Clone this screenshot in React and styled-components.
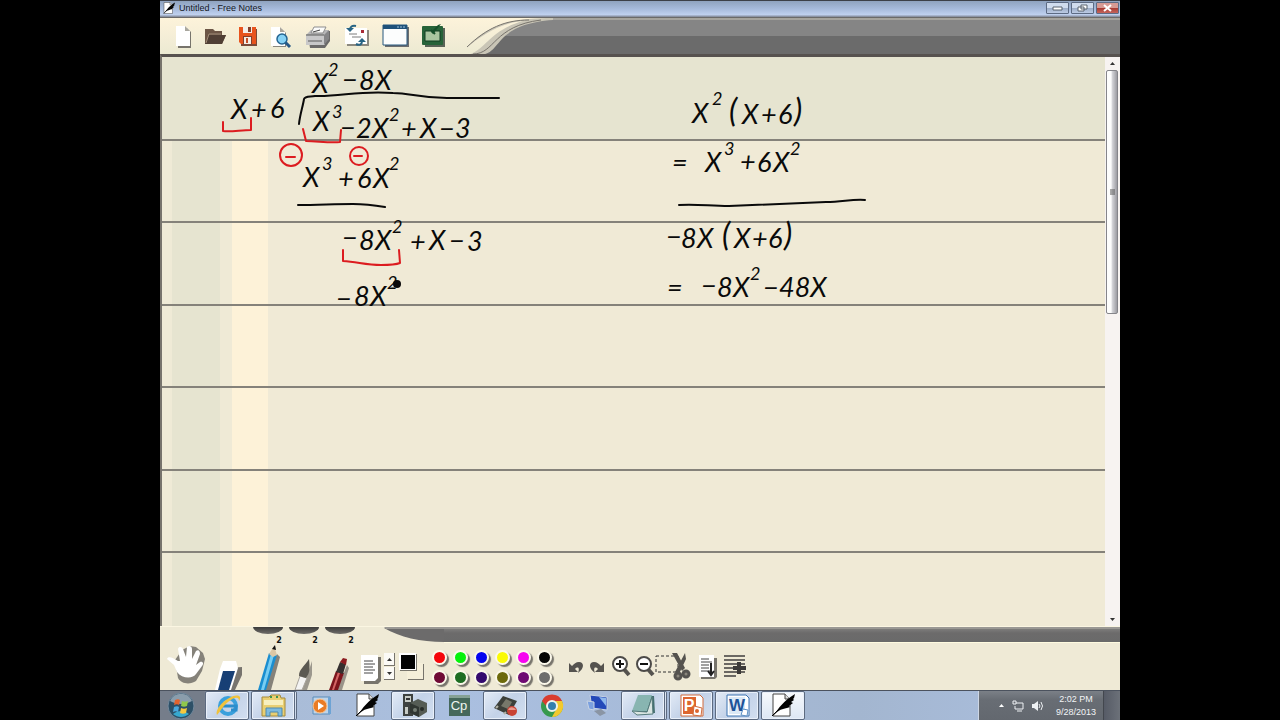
import React from "react";
import styled, { createGlobalStyle, css } from "styled-components";

const GlobalStyle = createGlobalStyle`
  *, *::before, *::after { box-sizing: border-box; }
  body { margin: 0; background: #000; font-family: "Liberation Sans", Arial, sans-serif; }
  button { font: inherit; color: inherit; padding: 0; border: 0; background: none; }
  svg { display: block; overflow: visible; }
`;

const Screen = styled.div`
  min-height: 100vh;
  display: flex;
  justify-content: center;
  background: #000;
`;

const Desktop = styled.div`
  width: 75%;
  display: flex;
  flex-direction: column;
  background: #efead6;
`;

/* Title bar */

const TitleBar = styled.header`
  display: flex;
  align-items: flex-start;
  height: 18px;
  padding: 1px 1px 0 3px;
  border-top: 1px solid #3c4048;
  border-bottom: 1px solid #6b6a68;
  background: linear-gradient(#8fa3bf, #a7bbdc 50%, #bfd0ee 85%, #7d8290);
`;

const Title = styled.h1`
  flex: 1;
  margin: 0 0 0 4px;
  font-size: 9px;
  line-height: 12px;
  font-weight: 400;
  color: #14161c;
`;

const WindowButtons = styled.div`
  display: flex;
  gap: 2px;
`;

const WindowButton = styled.button`
  display: grid;
  place-items: center;
  width: 23px;
  height: 12px;
  border: 1px solid #5d6b84;
  border-radius: 1px;
  background: ${(p) =>
    p.$close
      ? "linear-gradient(#d79a94 45%, #a83830 50%, #c4655c)"
      : "linear-gradient(#d0dcee 45%, #9aabc6 50%, #bccbe4)"};
`;

/* Top toolbar */

const Toolbar = styled.div`
  display: flex;
  height: 36px;
  background: linear-gradient(#fdf3da, #f3edd6 60%, #ecead2);
`;

const ToolbarIcons = styled.nav`
  display: flex;
  align-items: center;
  gap: 13px;
  padding: 0 18px 0 15px;
`;

const IconButton = styled.button`
  display: block;
  flex: none;
`;

const ToolbarFill = styled.div`
  flex: 1;
  background: linear-gradient(#a5a39d 2px, #858585 2px, #858585 18px, #6b6b6b 18px);
`;

/* Paper */

const Workspace = styled.main`
  flex: 1;
  display: flex;
  border-top: 3px solid #57524f;
  border-left: 2px solid #77736c;
`;

const Paper = styled.section`
  position: relative;
  flex: 1;
  display: grid;
  grid-template-rows: 84px repeat(5, 1fr) 73px;
  overflow: hidden;
  background: linear-gradient(
    90deg,
    #efead6 10px,
    #e6e4d0 10px,
    #e6e4d0 58px,
    #efead6 58px,
    #efead6 70px,
    #fdf2d8 70px,
    #fdf2d8 106px,
    #f0ead6 106px
  );
`;

const PaperRow = styled.div`
  border-bottom: ${(p) => (p.$last ? "0" : "2px solid #85827a")};
  background: ${(p) => (p.$first ? "#e6e4d0" : "transparent")};
`;

const InkLayer = styled.svg`
  position: absolute;
  inset: 0;
  width: 100%;
  height: 100%;
  font-family: Lato, "Open Sans", sans-serif;
  font-style: italic;
  fill: #0a0a0a;
`;

const ScrollTrack = styled.div`
  display: flex;
  flex-direction: column;
  width: 15px;
  padding: 0 2px 0 1px;
  background: #f7f3f1;
`;

const ScrollArrow = styled.button`
  display: grid;
  place-items: center;
  height: 13px;
`;

const ScrollArea = styled.div`
  flex: 1;
`;

const ScrollThumb = styled.div`
  display: grid;
  place-items: center;
  height: 45%;
  border: 1px solid #85858a;
  border-radius: 2px;
  background: linear-gradient(90deg, #fdfdfd 40%, #d2d2d6 55%, #9c9ca2);
`;

/* Bottom tool dock */

const Dock = styled.div`
  display: flex;
  height: 64px;
  border-top: 1px solid #fbf6e2;
  background: #efead6;
`;

const PenTray = styled.div`
  display: flex;
  align-items: flex-end;
  padding-left: 6px;
`;

const PenButton = styled.button`
  display: flex;
  flex-direction: column;
  align-items: center;
  width: 36px;
  height: 63px;
`;

const PenTab = styled.span`
  width: 30px;
  height: 7px;
  border-radius: 0 0 50% 50% / 0 0 100% 100%;
  background: linear-gradient(#3c3b3a, #6f6d6a);
`;

const PenSize = styled.span`
  margin-top: 2px;
  padding-left: 22px;
  font: 700 8px/10px "DejaVu Sans", sans-serif;
  color: #111;
`;

const DockMain = styled.div`
  flex: 1;
  display: flex;
  flex-direction: column;
`;

const DockBand = styled.div`
  display: flex;
  height: 16px;
`;

const DockBandFill = styled.div`
  flex: 1;
  border-bottom: 1px solid #fffbe0;
  background: linear-gradient(#9a9894 2px, #7d7c7b 2px, #6c6b6b 6px, #6a6a6a);
`;

const DockTools = styled.div`
  flex: 1;
  display: flex;
  align-items: center;
`;

const Spinner = styled.div`
  display: flex;
  flex-direction: column;
  gap: 1px;
  margin-right: 4px;
`;

const SpinButton = styled.button`
  display: grid;
  place-items: center;
  width: 11px;
  height: 13px;
  background: #fbfaf6;
  border-right: 1px solid #77746c;
  border-bottom: 1px solid #77746c;
`;

const Palette = styled.div`
  display: grid;
  grid-template-columns: repeat(6, 15px);
  gap: 5px 6px;
  margin: 2px 16px 0 7px;
`;

const Swatch = styled.button`
  width: 15px;
  height: 15px;
  border: 2px solid #fbf8ea;
  border-radius: 50%;
  background: ${(p) => p.$color};
  box-shadow: 2px 2px 1px #77746c;
`;

const ToolGroup = styled.div`
  display: flex;
  align-items: center;
  gap: ${(p) => p.$gap}px;
  margin-right: ${(p) => p.$after}px;
`;

/* Taskbar */

const Taskbar = styled.footer`
  display: flex;
  height: 30px;
  border-top: 1px solid #4b525e;
  background: linear-gradient(90deg, #757d8a 44px, #a9bbd4 60px, #aabfe0 300px, #a3b6d0 700px, #adc1e2);
`;

const StartButton = styled.button`
  display: grid;
  place-items: center;
  width: 41px;
  margin-right: 4px;
`;

const TaskList = styled.nav`
  flex: 1;
  display: flex;
  gap: 2px;
`;

const TaskButton = styled.button`
  display: grid;
  place-items: center;
  width: ${(p) => (p.$stacked ? 46 : 44)}px;
  border-radius: 2px;
  ${(p) =>
    p.$open &&
    css`
      border: 1px solid #5c6a80;
      border-right-width: ${p.$stacked ? "3px" : "1px"};
      border-right-style: ${p.$stacked ? "double" : "solid"};
      background: linear-gradient(135deg, #e3ebf6, #c3d2e8 50%, #d3dff0);
      box-shadow: inset 0 0 0 1px #e9f0fa;
    `}
  ${(p) => p.$active && css`background: linear-gradient(#f6f9fd, #dde7f4);`}
`;

const Tray = styled.div`
  display: flex;
  align-items: center;
  padding-left: 20px;
  border-left: 1px solid #cdd6e4;
  background: linear-gradient(#7b8087, #686d74 30%, #63686f);
`;

const TrayIcons = styled.div`
  display: flex;
  align-items: center;
  gap: 8px;
`;

const Clock = styled.time`
  margin: 0 7px 0 12px;
  font-size: 9px;
  line-height: 13px;
  text-align: center;
  color: #f2f4f6;
`;

const ShowDesktop = styled.button`
  align-self: stretch;
  width: 17px;
  border-left: 1px solid #43474e;
  background: linear-gradient(90deg, #565b66, #6c7179);
`;

/* Icons */

const Icon = ({ w, h = 24, children }) => (
  <svg width={w} height={h} viewBox={`0 0 ${w} ${h}`} aria-hidden="true">
    {children}
  </svg>
);

const toolbarIcons = [
  ["New", 16, (
    <>
      <path d="M3 4h9l4 4v16H3z" fill="#77746c" />
      <path d="M1 2h9l5 5v15H1z" fill="#fff" />
      <path d="M10 2v5h5z" fill="#a9a79e" />
    </>
  )],
  ["Open", 22, (
    <>
      <path d="M1 5h8l2 2h7v4h4l-4 9H1z" fill="#6d5646" />
      <path d="M1 20 5 11h17l-4 9z" fill="#503f35" />
      <path d="M2 19 5 10h12" stroke="#a08c78" fill="none" />
    </>
  )],
  ["Save", 18, (
    <>
      <path d="M2 5h16v17H2z" fill="#7b4a38" />
      <path d="M0 3h17v17H2l-2-2z" fill="#e8541d" />
      <path d="M4 3h9v6H4z" fill="#f4eee8" />
      <path d="M9 3h3v5H9zM4 12h9v8H4z" fill="#82402c" />
      <path d="M5 13h7v7H5z" fill="#f6ede4" />
      <path d="M7 14h2v5H7z" fill="#c44f27" />
    </>
  )],
  ["Print preview", 22, (
    <>
      <path d="M3 5h9l4 4v14H3z" fill="#8a877e" />
      <path d="M1 3h9l5 5v14H1z" fill="#fff" />
      <path d="M10 3v5h5z" fill="#aaa69d" />
      <path d="m14 17 6 6" stroke="#265886" strokeWidth="3" />
      <circle cx="12" cy="15" r="5" fill="#86d2f5" stroke="#246491" strokeWidth="1.5" />
    </>
  )],
  ["Print", 26, (
    <>
      <path d="M3 11 7 7h18v10l-5 7H5z" fill="#6b6a69" />
      <path d="M1 11 6 6h18l-4 6v9H1z" fill="#b7b7b8" />
      <path d="m9 3h12l-3 6H6z" fill="#fbfbfa" stroke="#8d8d8d" />
      <path d="M1 11h18v10H1z" fill="#c8c8c9" />
      <path d="M19 11 24 6v9l-5 6z" fill="#858587" />
      <path d="M1 11h18M3 17h14" stroke="#5b5b5b" />
      <path d="m8 8 7-2" stroke="#444" />
    </>
  )],
  ["Send mail", 25, (
    <>
      <path d="M3 6h22v16H3z" fill="#8c897f" />
      <path d="M1 4h22v16H1z" fill="#fff" />
      <path d="M5 10h8M8 13h9" stroke="#7c7c7c" />
      <path d="M17 6h3v3h-3z" fill="#a82a35" />
      <path d="M12 2C8 1 6 3 6 6" stroke="#286484" strokeWidth="2" fill="none" />
      <path d="M2 4h8l-4 4z" fill="#286484" />
      <path d="M12 20c4 2 6 0 6-3" stroke="#286484" strokeWidth="2" fill="none" />
      <path d="M14 18h8l-4-4z" fill="#286484" />
    </>
  )],
  ["Full screen", 27, (
    <>
      <path d="M3 3h24v20H3z" fill="#6c6d6e" />
      <path d="M1 1h24v20H1z" fill="#fcfdfd" stroke="#26587e" />
      <path d="M1 1h24v4H1z" fill="#1e517a" />
      <path d="M15 3h2m1 0h2m1 0h2" stroke="#9fc3db" />
    </>
  )],
  ["Options", 23, (
    <>
      <path d="M3 4h20v19H3z" fill="#596356" />
      <rect x="0" y="2" width="21" height="19" rx="1" fill="#276339" />
      <path d="M3 7h15v10H3z" fill="#a9c6a0" stroke="#123f22" />
      <path d="m11 10 8-10-3 1-7 7z" fill="#164f2a" />
      <path d="m9 6 4 4" stroke="#164f2a" strokeWidth="2" />
    </>
  )],
];

const FeatherIcon = ({ w, h }) => (
  <svg width={w} height={h} viewBox="0 0 24 24" aria-hidden="true">
    <path d="M2 1h12l5 5v17H2z" fill="#fff" stroke="#444" />
    <path d="M14 1v5h5" fill="#ddd" stroke="#444" />
    <path d="M2 23C8 15 12 8 24 1l-1 4-1 1 1 1-3 2 2 1-4 3 1 1C13 16 9 16 5 20z" fill="#050505" />
    <path d="M1 23 15 9" stroke="#000" />
  </svg>
);

const PencilIcon = () => (
  <Icon w={30} h={44}>
    <path d="m11 44 13-36 3 3-9 33z" fill="#85827a" />
    <path d="M5 44 16 7l8 2-11 35z" fill="#1a8ed0" />
    <path d="m8 44 10-36 3 1-10 35z" fill="#78cdf2" />
    <path d="m16 8 5-8 3 9-4 2z" fill="#dcc7a5" />
    <path d="m19 3 3-4 1 5z" fill="#111" />
  </Icon>
);

const BrushIcon = () => (
  <Icon w={30} h={44}>
    <path d="m12 44 6-14 5-15v14l-5 15z" fill="#9c988e" />
    <path d="m6 44 5-14 7 2-5 12z" fill="#f3f3f2" stroke="#a8a49c" />
    <path d="M10 30c0-7 5-9 10-17 1 9 1 14-3 19z" fill="#5b5952" />
  </Icon>
);

const MarkerIcon = () => (
  <Icon w={30} h={44}>
    <path d="m12 44 10-25 2 3-7 22z" fill="#99948a" />
    <path d="m4 44 7-19 8 2-6 17z" fill="#7c141c" />
    <path d="m7 44 6-18 2 1-6 17z" fill="#d46565" />
    <path d="m11 26 4-10 6 2-3 10z" fill="#35302f" />
    <path d="m15 16 3-4 4 1-1 6z" fill="#8c1c20" />
  </Icon>
);

const Magnifier = ({ plus }) => (
  <Icon w={19} h={22}>
    <path d="m11 12 6 7" stroke="#55534f" strokeWidth="4" />
    <circle cx="8" cy="8" r="7" fill="#fff" stroke="#4c4a48" strokeWidth="2" />
    <path d={plus ? "M4 8h8M8 4v8" : "M4 8h8"} stroke="#111" strokeWidth="2" />
  </Icon>
);

const Turn = ({ flip }) => (
  <Icon w={16} h={14}>
    <g transform={flip ? "matrix(-1 0 0 1 16 0)" : undefined}>
      <path d="M1 3v9h9L7 9c3-3 5-1 3 4 7-5 6-11 1-11-3 0-5 2-7 4z" fill="#55534f" />
    </g>
  </Icon>
);

const taskIcons = [
  ["Internet Explorer", "open", (
    <>
      <circle cx="13" cy="13" r="8" fill="none" stroke="#3aa0dc" strokeWidth="4" />
      <path d="M7 13h14v4h-5" fill="none" stroke="#2b8dcc" strokeWidth="3" />
      <path d="M2 22C-1 15 16 0 24 3c2 1 1 4 0 5 0-5-5-4-11 1C7 14 5 19 2 22z" fill="#f0c23c" />
    </>
  )],
  ["Windows Explorer", "stacked", (
    <>
      <path d="M1 4h7l2-2h9l1 3h4v18H1z" fill="#e9cf72" stroke="#a58a3b" />
      <path d="M3 7h19v5H3z" fill="#f7efbf" />
      <path d="M9 4h2m4 0h2" stroke="#3d9452" strokeWidth="2" />
      <path d="M5 15h16v8h-4v-4H9v4H5z" fill="#7dbbe0" stroke="#4f89ad" />
    </>
  )],
  ["Media Player", "", (
    <>
      <path d="M4 4h17v17H4z" fill="#bed4ea" stroke="#5a8cb8" />
      <path d="M19 4h3v17h-3z" fill="#6da3d4" />
      <circle cx="11" cy="13" r="7" fill="#ea7b25" stroke="#f9c694" />
      <path d="m9 9 6 4-6 4z" fill="#fff" />
    </>
  )],
  ["Free Notes", "", <FeatherIcon key="f" w={24} h={24} />],
  ["Device Stage", "open", (
    <>
      <path d="M2 1h10v22H2z" fill="#3e4240" />
      <path d="M4 3h6v6H4zM4 14h3v7H4z" fill="#c8ccc6" />
      <path d="M5 5h4v2H5z" fill="#333" />
      <path d="m9 10 8-4 9 4v9l-8 5-9-4z" fill="#555c55" />
      <path d="m9 10 9 4v10l-9-4z" fill="#303632" />
      <circle cx="14" cy="17" r="2" fill="#747d74" />
      <circle cx="21" cy="16" r="2" fill="#262b28" />
    </>
  )],
  ["Captivate", "", (
    <>
      <path d="M2 2h21v21H2z" fill="#45685b" />
      <path d="M2 2h21v3H2z" fill="#86a296" />
      <text x="12" y="17" fontSize="13" textAnchor="middle" fill="#eef5f0" fontFamily="Liberation Sans, sans-serif">Cp</text>
    </>
  )],
  ["Screen Recorder", "open", (
    <>
      <path d="m1 15 9-12 14 5-8 14z" fill="#3c3f39" />
      <path d="m8 13 5-7 6 3-4 7z" fill="#77786a" />
      <path d="m3 15 2-2m6 8 2-2" stroke="#b0b1a5" strokeWidth="2" />
      <circle cx="19" cy="18" r="5" fill="#c84334" />
      <path d="M15 17c2-4 6-3 8 0z" fill="#e9978c" />
    </>
  )],
  ["Chrome", "", (
    <>
      <circle cx="13" cy="13" r="11" fill="#36994d" />
      <path d="M3 8a11 11 0 0 1 20 0H13l-4 7z" fill="#d93c30" />
      <path d="M23 8a11 11 0 0 1-10 16l5-9-1-7z" fill="#f2c92e" />
      <circle cx="13" cy="13" r="5" fill="#347fae" stroke="#eef3ee" strokeWidth="2" />
    </>
  )],
  ["Remote Desktop", "", (
    <>
      <path d="m5 2 17 2v13L7 15z" fill="#2449b9" stroke="#c8d4e4" />
      <path d="m14 4 7 1v8z" fill="#8fb8ec" />
      <path d="m2 8 7 1v8l-5-1z" fill="#7ba0df" stroke="#c8d4e4" />
      <path d="m9 18 7-2 5 4-6 3z" fill="#8a95a4" />
    </>
  )],
  ["Notebook", "stacked", (
    <>
      <path d="M8 3h15l1 17H6z" fill="#456f70" />
      <path d="M7 2h14l-5 16H1z" fill="#88b5b1" />
      <path d="m1 18 15 1 5-15 1 17-16 1z" fill="#d9e5e2" stroke="#557b7b" />
    </>
  )],
  ["PowerPoint", "open", (
    <>
      <path d="M2 2h19l3 3v18H2z" fill="#fff" stroke="#d16b3c" />
      <path d="M4 4h13v17H4z" fill="#dd652f" />
      <text x="10" y="18" fontSize="16" fontWeight="700" textAnchor="middle" fill="#fff" fontFamily="Liberation Sans, sans-serif">P</text>
      <path d="m15 13 8 2-1 8-8-1z" fill="#fff" stroke="#d16b3c" />
      <circle cx="18" cy="18" r="2" fill="#dd652f" />
    </>
  )],
  ["Word", "open", (
    <>
      <path d="M2 2h19l3 3v18H2z" fill="#fff" stroke="#3b72b1" />
      <path d="M4 4h16v17H4z" fill="#dce9f6" />
      <text x="12" y="18" fontSize="17" fontWeight="700" textAnchor="middle" fill="#1e5498" fontFamily="Liberation Sans, sans-serif">W</text>
      <path d="m18 16 5 1-1 6-6-1z" fill="#fff" stroke="#5d91c5" />
    </>
  )],
  ["Untitled - Free Notes", "active", <FeatherIcon key="n" w={24} h={24} />],
];

const colors = [
  ["Red", "#f5060b"], ["Green", "#06f20b"], ["Blue", "#0505ef"],
  ["Yellow", "#fafa05"], ["Magenta", "#f605f0"], ["Black", "#050505"],
  ["Maroon", "#6f0a36"], ["Dark green", "#1d6d22"], ["Indigo", "#330a6e"],
  ["Olive", "#6d6a0c"], ["Purple", "#6e0a72"], ["Gray", "#6d6d6d"],
];

/* Handwriting: each expression is a list of [characters, x, baseline, size]. */
const BIG = 27;
const SUP = 18;
const PAREN = 32;
const expressions = [
  [["X", 150, 36, BIG], ["2", 166, 19, SUP], ["−", 180, 32, BIG], ["8", 197, 33, BIG], ["X", 213, 33, BIG]],
  [["X", 69, 62, BIG], ["+", 89, 62, BIG], ["6", 108, 61, BIG]],
  [
    ["X", 151, 74, BIG], ["3", 170, 61, SUP], ["−", 178, 80, BIG], ["2", 194, 81, BIG], ["X", 210, 81, BIG],
    ["2", 227, 64, SUP], ["+", 239, 81, BIG], ["X", 258, 81, BIG], ["−", 277, 81, BIG], ["3", 293, 81, BIG],
  ],
  [["X", 141, 130, BIG], ["3", 160, 113, SUP], ["+", 176, 131, BIG], ["6", 195, 131, BIG], ["X", 211, 131, BIG], ["2", 227, 113, SUP]],
  [
    ["−", 180, 190, BIG], ["8", 197, 193, BIG], ["X", 213, 193, BIG], ["2", 230, 176, SUP],
    ["+", 248, 194, BIG], ["X", 267, 193, BIG], ["−", 287, 193, BIG], ["3", 305, 194, BIG],
  ],
  [["−", 174, 251, BIG], ["8", 192, 249, BIG], ["X", 208, 249, BIG], ["2", 225, 232, SUP]],
  [["X", 530, 66, BIG], ["2", 550, 48, SUP], ["(", 567, 65, PAREN], ["X", 580, 67, BIG], ["+", 599, 67, BIG], ["6", 616, 67, BIG], [")", 632, 65, PAREN]],
  [["=", 510, 115, BIG], ["X", 543, 115, BIG], ["3", 562, 98, SUP], ["+", 578, 114, BIG], ["6", 595, 115, BIG], ["X", 611, 115, BIG], ["2", 628, 98, SUP]],
  [["−", 504, 189, BIG], ["8", 519, 191, BIG], ["X", 535, 191, BIG], ["(", 560, 189, PAREN], ["X", 572, 191, BIG], ["+", 590, 191, BIG], ["6", 606, 191, BIG], [")", 622, 189, PAREN]],
  [["=", 505, 240, BIG], ["−", 539, 238, BIG], ["8", 555, 240, BIG], ["X", 571, 240, BIG], ["2", 588, 223, SUP], ["−", 601, 240, BIG], ["48X", 617, 240, BIG]],
];

const Ink = () => (
  <InkLayer>
    {expressions.map((parts, i) => (
      <text key={i}>
        {parts.map(([chars, x, y, size], j) => (
          <tspan key={j} x={x} y={y} fontSize={size}>{chars}</tspan>
        ))}
      </text>
    ))}
    <g fill="none" stroke="#0a0a0a" strokeWidth="2" strokeLinecap="round" strokeLinejoin="round">
      <path d="M137 67c1-10 4-18 5-25 1-3 6-2 11-3 25 1 45-6 78-3 18 0 25 5 54 5h52" />
      <path d="M136 148c20 0 36-1 55-1 12 0 20 1 32 3" />
      <path d="M517 148c20-1 30 1 50 1l97-4c17 0 25-3 39-2" />
    </g>
    <g fill="none" stroke="#dc1c20" strokeWidth="2" strokeLinecap="round" strokeLinejoin="round">
      <path d="M61 65v9c8 1 18-1 28-1V61" />
      <path d="m141 72 3 12c11 0 23 2 34 1l1-12" />
      <path d="M181 193v11c15 1 23 4 38 4 8 0 14 0 19-2l-1-13" />
      <circle cx="129" cy="98" r="11" />
      <circle cx="197" cy="99" r="9" />
      <path d="M124 100h9M192 99h8" />
    </g>
    <circle cx="235" cy="227" r="4" />
  </InkLayer>
);

const Triangle = ({ down, color = "#333" }) => (
  <Icon w={5} h={3}><path d={down ? "M0 0h5L2.5 3z" : "M0 3h5L2.5 0z"} fill={color} /></Icon>
);

export default function App() {
  return (
    <Screen>
      <GlobalStyle />
      <Desktop>
        <TitleBar>
          <FeatherIcon w={12} h={12} />
          <Title>Untitled - Free Notes</Title>
          <WindowButtons>
            <WindowButton aria-label="Minimize">
              <Icon w={11} h={5}><path d="M1 1h9v3H1z" fill="#fff" stroke="#59626f" /></Icon>
            </WindowButton>
            <WindowButton aria-label="Restore">
              <Icon w={11} h={8}><path d="M4 1h6v4H4zM1 3h6v4H1z" fill="#fff" stroke="#59626f" /></Icon>
            </WindowButton>
            <WindowButton aria-label="Close" $close>
              <Icon w={9} h={8}><path d="m1 1 7 6m0-6L1 7" stroke="#fff" strokeWidth="2" /></Icon>
            </WindowButton>
          </WindowButtons>
        </TitleBar>

        <Toolbar>
          <ToolbarIcons>
            {toolbarIcons.map(([name, w, art]) => (
              <IconButton key={name} aria-label={name}><Icon w={w}>{art}</Icon></IconButton>
            ))}
          </ToolbarIcons>
          <Icon w={90} h={36}>
            <path d="M20 36C38 32 34 4 90 1v35z" fill="#6b6b6b" />
            <path d="M36 18C46 8 62 3 90 1v17z" fill="#858585" />
            <path d="M4 29C24 8 46 0 90 0v2C34 6 38 32 22 36H8C24 29 28 12 60 3 36 5 20 17 4 29z" fill="#c9c5b6" />
            <path d="M4 29C24 10 42 2 66 2M10 36C32 36 30 8 78 2" fill="none" stroke="#77736c" />
          </Icon>
          <ToolbarFill />
        </Toolbar>

        <Workspace>
          <Paper aria-label="Notes page">
            {Array.from({ length: 7 }, (_, i) => (
              <PaperRow key={i} $first={i === 0} $last={i === 6} />
            ))}
            <Ink />
          </Paper>
          <ScrollTrack>
            <ScrollArrow aria-label="Scroll up"><Triangle /></ScrollArrow>
            <ScrollArea>
              <ScrollThumb>
                <Icon w={5} h={6}><path d="M0 1h5M0 3h5M0 5h5" stroke="#555" /></Icon>
              </ScrollThumb>
            </ScrollArea>
            <ScrollArrow aria-label="Scroll down"><Triangle down /></ScrollArrow>
          </ScrollTrack>
        </Workspace>

        <Dock>
          <PenTray>
            <IconButton aria-label="Hand">
              <Icon w={42} h={54}>
                <path d="m9 24 7-10 8-4 6 1 7 6 2 6-3 12-6 10c-6 4-15 3-18-3z" fill="#85827a" />
                <path d="M11 36 8 29 1 23c1-3 5-2 11 2l2 0-2-12c1-3 4-2 5 0l3 8 1-10c2-2 5-1 5 2v10l4-8c3-2 4 1 4 3l-4 11 4-3c3-1 4 2 2 4l-6 8c-3 5-14 5-19-2z" fill="#fff" />
              </Icon>
            </IconButton>
            <IconButton aria-label="Eraser">
              <Icon w={42} h={32}>
                <path d="m16 32 5-22 13-1v8l-7 15z" fill="#77746e" />
                <path d="m7 32 5-21 3-8h13l2 7-7 22z" fill="#fff" />
                <path d="m10 32 5-19h12l-6 19z" fill="#173f75" />
              </Icon>
            </IconButton>
            <PenButton aria-label="Pencil, width 2"><PenTab /><PenSize>2</PenSize><PencilIcon /></PenButton>
            <PenButton aria-label="Brush, width 2"><PenTab /><PenSize>2</PenSize><BrushIcon /></PenButton>
            <PenButton aria-label="Marker, width 2"><PenTab /><PenSize>2</PenSize><MarkerIcon /></PenButton>
            <IconButton aria-label="Pages">
              <Icon w={26} h={38}>
                <path d="M6 5h17v24l-3 3H6z" fill="#77746c" />
                <path d="M3 3h17v23l-3 3H3z" fill="#fff" />
                <path d="M6 9h9M6 12h11M6 15h9M6 18h11M6 21h9" stroke="#444" />
              </Icon>
            </IconButton>
          </PenTray>
          <DockMain>
            <DockBand>
              <Icon w={60} h={16}>
                <path d="M0 1h60v14C36 15 16 10 0 1z" fill="#6c6b6b" />
                <path d="M0 0h60v2H2z" fill="#9a9894" />
              </Icon>
              <DockBandFill />
            </DockBand>
            <DockTools>
              <Spinner>
                <SpinButton aria-label="Previous page"><Triangle /></SpinButton>
                <SpinButton aria-label="Next page"><Triangle down /></SpinButton>
              </Spinner>
              <IconButton aria-label="Current colour">
                <Icon w={26} h={28}>
                  <path d="M9 11h16v16H9z" fill="#77746c" />
                  <path d="M8 10h16v16H8z" fill="#f5efda" />
                  <path d="M1 1h17v17H1z" fill="#77746c" />
                  <path d="M0 0h17v17H0z" fill="#fff" />
                  <path d="M2 2h14v14H2z" fill="#030303" />
                </Icon>
              </IconButton>
              <Palette>
                {colors.map(([name, c]) => <Swatch key={name} aria-label={name} $color={c} />)}
              </Palette>
              <ToolGroup $gap={5} $after={7}>
                <IconButton aria-label="Undo"><Turn /></IconButton>
                <IconButton aria-label="Redo"><Turn flip /></IconButton>
              </ToolGroup>
              <ToolGroup $gap={5} $after={1}>
                <IconButton aria-label="Zoom in"><Magnifier plus /></IconButton>
                <IconButton aria-label="Zoom out"><Magnifier /></IconButton>
              </ToolGroup>
              <ToolGroup $gap={7} $after={0}>
                <IconButton aria-label="Cut selection">
                  <Icon w={35} h={28}>
                    <path d="M0 3h22v16H0z" fill="none" stroke="#333" strokeDasharray="3 2" />
                    <path d="m16 0 5 0 8 15-3 3zM29 0l1 6-7 15-4-2z" fill="#55534f" />
                    <circle cx="22" cy="23" r="3" fill="#8a867c" stroke="#55534f" strokeWidth="3" />
                    <circle cx="30" cy="21" r="3" fill="#8a867c" stroke="#55534f" strokeWidth="3" />
                  </Icon>
                </IconButton>
                <IconButton aria-label="Next sheet">
                  <Icon w={19} h={26}>
                    <path d="M3 4h16v19l-2 2H3z" fill="#77746c" />
                    <path d="M1 1h15v22H1z" fill="#fff" />
                    <path d="M3 5h8M3 8h11M3 11h8M3 14h8M3 17h9" stroke="#444" />
                    <path d="M13 9v11m-3-3 3 4 3-4" stroke="#222" strokeWidth="2" fill="none" />
                  </Icon>
                </IconButton>
                <IconButton aria-label="Insert lines">
                  <Icon w={23} h={26}>
                    <path d="M0 2h21M0 6h21M0 10h21M0 14h21M0 18h21M0 22h12" stroke="#6b6863" strokeWidth="2" />
                    <path d="M9 14h13M15 8v12" stroke="#3c3a38" strokeWidth="4" />
                  </Icon>
                </IconButton>
              </ToolGroup>
            </DockTools>
          </DockMain>
        </Dock>

        <Taskbar>
          <StartButton aria-label="Start">
            <Icon w={28} h={28}>
              <circle cx="14" cy="14" r="13" fill="#2d5067" stroke="#73899c" />
              <path d="M3 9a12 12 0 0 1 22 0c-7 4-15 4-22 0z" fill="#8a9dac" />
              <path d="M6 22c5-4 11-4 16 0-5 4-11 4-16 0z" fill="#37a9cf" />
              <path d="M8 8c2-1 4-1 5 0l-1 5c-1-1-3-1-5 0z" fill="#e3622d" />
              <path d="M15 9c2 1 4 1 6 0l-1 5c-2 1-4 1-6 0z" fill="#8fc84b" />
              <path d="M7 15c2-1 4-1 5 0l-1 5c-2-1-3-1-5 0z" fill="#4aa7dd" />
              <path d="M14 16c2 1 4 1 6 0l-1 5c-2 1-4 1-6 0z" fill="#f5c83e" />
            </Icon>
          </StartButton>
          <TaskList aria-label="Running programs">
            {taskIcons.map(([name, state, art]) => (
              <TaskButton key={name} aria-label={name} $open={state !== ""} $stacked={state === "stacked"} $active={state === "active"}>
                <Icon w={25} h={25}>{art}</Icon>
              </TaskButton>
            ))}
          </TaskList>
          <Tray>
            <TrayIcons>
              <Triangle color="#fff" />
              <Icon w={12} h={12}>
                <path d="M4 3h7v6H3V6M5 11h5M1 1h3v3H1z" fill="none" stroke="#eef1f4" />
              </Icon>
              <Icon w={12} h={12}>
                <path d="M0 4h2l4-3v10L2 8H0z" fill="#eef1f4" />
                <path d="M7 4q2 2 0 4M9 2q3 4 0 8" fill="none" stroke="#eef1f4" />
              </Icon>
            </TrayIcons>
            <Clock dateTime="2013-09-28T14:02">2:02 PM<br />9/28/2013</Clock>
            <ShowDesktop aria-label="Show desktop" />
          </Tray>
        </Taskbar>
      </Desktop>
    </Screen>
  );
}
